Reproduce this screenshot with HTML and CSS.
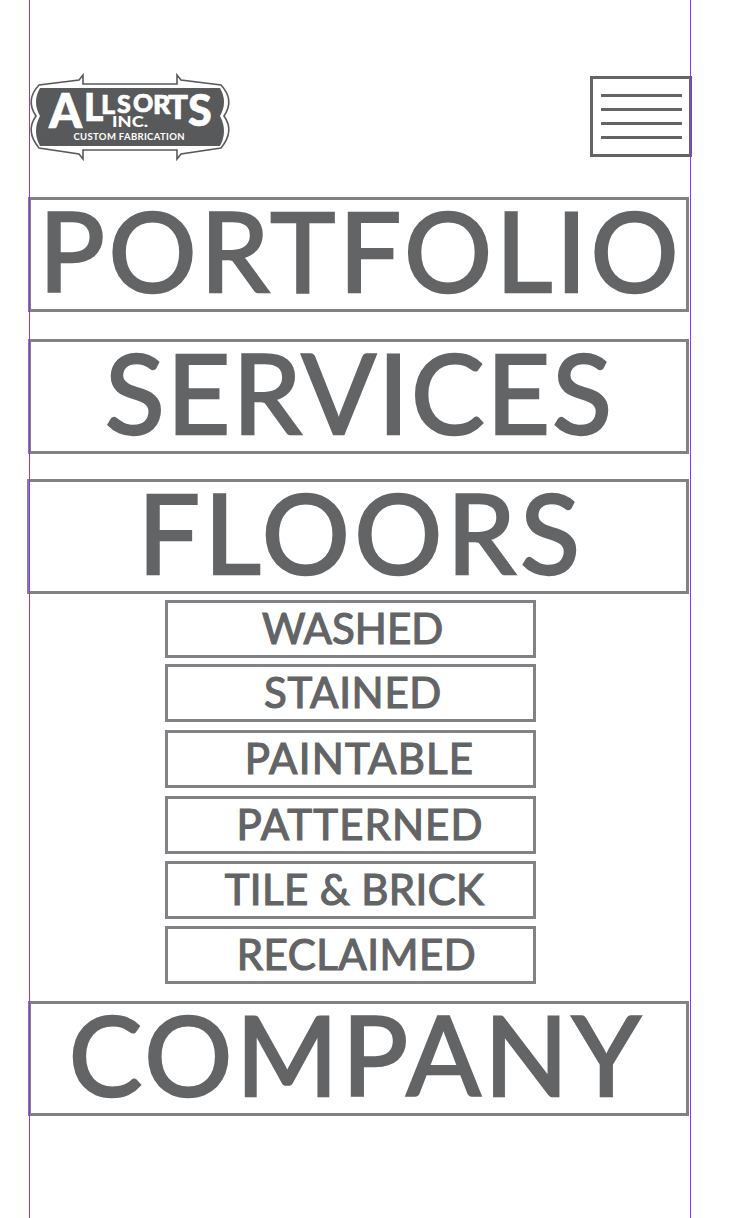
FILE: index.html
```html
<!DOCTYPE html>
<html lang="en">
<head>
    <meta charset="UTF-8">
    <meta name="viewport" content="width=device-width, initial-scale=1.0">
    <title>Allsorts Inc. Menu</title>
    <link rel="stylesheet" href="styles.css">
</head>
<body>
    <div class="page">
        <header class="top-bar">
            <a class="logo" href="#">
                <svg width="198" height="88" viewBox="0 0 198 88">
                    <path class="logo-edge" d="M51 2 L51 11 L145 11 L145 2 L149 7 L189 12 Q203 27 192 43 Q203 58 189 75 L149 81 L145 86 L145 77 L51 77 L51 86 L47 81 L7 75 Q-7 58 4 43 Q-7 27 7 12 L47 7 Z"/>
                    <path class="logo-plate" d="M8 15 L188 15 Q196 29 188 43 Q196 58 188 73 L8 73 Q0 58 8 43 Q0 29 8 15 Z"/>
                    <text class="logo-main">
                        <tspan x="17" y="55" font-size="47">A</tspan>
                        <tspan x="52" y="48" font-size="37">L</tspan>
                        <tspan x="69" y="41" font-size="27">L</tspan>
                        <tspan x="85" y="40" font-size="25">S</tspan>
                        <tspan x="101" y="39" font-size="25">O</tspan>
                        <tspan x="121" y="41" font-size="27">R</tspan>
                        <tspan x="136" y="46" font-size="33">T</tspan>
                        <tspan x="156" y="53" font-size="43">S</tspan>
                    </text>
                    <text class="logo-inc" x="80" y="54" textLength="36" lengthAdjust="spacingAndGlyphs">INC.</text>
                    <text class="logo-sub" x="97" y="67" text-anchor="middle" textLength="111">CUSTOM FABRICATION</text>
                </svg>
            </a>
            <button class="menu-toggle" type="button">
                <span></span>
                <span></span>
                <span></span>
                <span></span>
            </button>
        </header>

        <nav class="main-nav">
            <a class="nav-item nav-portfolio" href="#">PORTFOLIO</a>
            <a class="nav-item nav-services" href="#">SERVICES</a>
            <a class="nav-item nav-floors" href="#">FLOORS</a>
            <div class="sub-nav">
                <a class="sub-item washed" href="#">WASHED</a>
                <a class="sub-item stained" href="#">STAINED</a>
                <a class="sub-item paintable" href="#">PAINTABLE</a>
                <a class="sub-item patterned" href="#">PATTERNED</a>
                <a class="sub-item tile" href="#">TILE &amp; BRICK</a>
                <a class="sub-item reclaimed" href="#">RECLAIMED</a>
            </div>
            <a class="nav-item nav-company" href="#">COMPANY</a>
        </nav>
    </div>
</body>
</html>
```

FILE: styles.css
```css
html, body {
    margin: 0;
    padding: 0;
    background-color: #fff;
}

body {
    font-family: "Lato", "Liberation Sans", sans-serif;
    color: #636466;
    overflow: hidden;
}

a {
    color: inherit;
    text-decoration: none;
}

.page {
    position: relative;
    width: 662px;
    height: 1218px;
    margin-left: 29px;
}

/* guide lines run over the boxes */
.page::before,
.page::after {
    content: "";
    position: absolute;
    top: 0;
    bottom: 0;
    width: 1px;
    background-color: #9333ea;
}

.page::before {
    left: 0;
}

.page::after {
    right: 0;
}

.top-bar {
    display: flex;
    justify-content: space-between;
    align-items: flex-start;
    height: 197px;
    padding-top: 72px;
    box-sizing: border-box;
}

.logo {
    display: block;
    margin: 1px 0 0 3px;
}

.logo svg {
    display: block;
    overflow: visible;
}

.logo-edge {
    fill: #fff;
    stroke: #58595b;
    stroke-width: 1.6;
}

.logo-plate {
    fill: #58595b;
}

.logo-main {
    font-weight: 900;
    fill: #fff;
    stroke: #fff;
    stroke-width: 0.7;
}

.logo-inc {
    font-weight: 900;
    font-size: 15px;
    fill: #fff;
}

.logo-sub {
    font-weight: 700;
    font-size: 9.5px;
    fill: #fff;
}

.menu-toggle {
    box-sizing: border-box;
    display: flex;
    flex-direction: column;
    justify-content: center;
    gap: 11px;
    width: 102px;
    height: 81px;
    margin: 4px -1px 0 0;
    padding: 0 7px 0 8px;
    background: none;
    border: 3px solid #636466;
}

.menu-toggle span {
    display: block;
    height: 3px;
    background-color: #636466;
}

.main-nav {
    display: flex;
    flex-direction: column;
}

.nav-item {
    box-sizing: border-box;
    display: block;
    width: 661px;
    height: 115px;
    margin-left: -1px;
    border: 3px solid #808285;
    font-size: 110px;
    letter-spacing: 3.7px;
    -webkit-text-stroke: 2.5px #636466;
    line-height: 98px;
    text-align: center;
}

.nav-item + .nav-item {
    margin-top: 27px;
}

.nav-portfolio {
    padding-left: 4px;
}

.nav-services {
    letter-spacing: 2.1px;
    padding-left: 2px;
}

.nav-item.nav-floors {
    width: 662px;
    margin-top: 25px;
    margin-left: -2px;
    padding-left: 6px;
    letter-spacing: 4.5px;
}

.nav-company {
    padding-right: 4px;
}

.sub-nav {
    display: flex;
    flex-direction: column;
    gap: 7px;
    margin: 6px 0 17px 136px;
}

.sub-item {
    box-sizing: border-box;
    display: block;
    width: 371px;
    height: 58px;
    border: 3px solid #808285;
    font-size: 42px;
    letter-spacing: 0.7px;
    -webkit-text-stroke: 1.2px #636466;
    line-height: 50px;
    text-align: center;
}

.washed { padding-left: 4px; letter-spacing: 0; }
.stained { padding-left: 5px; margin-top: -1px; }
.paintable { padding-left: 18px; margin-top: 1px; letter-spacing: 1.2px; }
.patterned { padding-left: 19px; margin-top: 1px; letter-spacing: 1.1px; }
.tile { padding-left: 8px; letter-spacing: 0.4px; }
.reclaimed { padding-left: 12px; letter-spacing: 0.5px; }
```
